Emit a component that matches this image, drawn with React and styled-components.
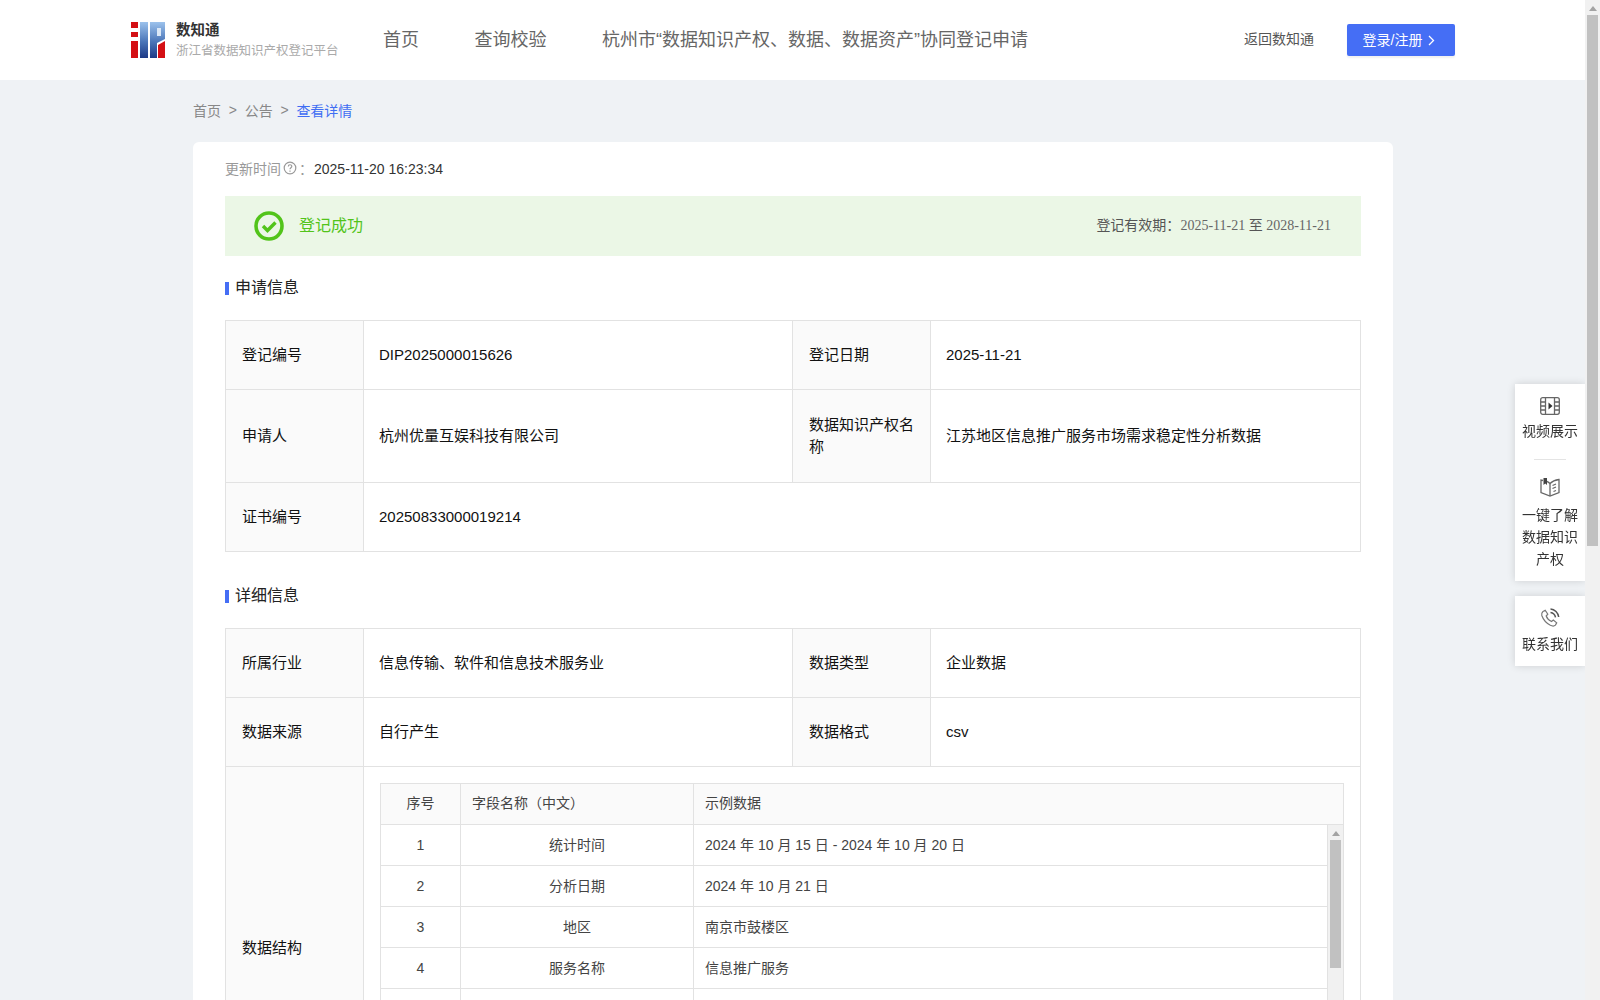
import React from 'react';
import styled, { createGlobalStyle } from 'styled-components';

const GlobalStyle = createGlobalStyle`
html, body {
    margin: 0;
    padding: 0;
}
body {
    background: #eff2f5;
    color: #222;
    font-family: "Liberation Sans", "Noto Sans CJK SC", sans-serif;
    font-size: 14px;
}
* {
    box-sizing: border-box;
}
`;

const Page = styled.div`
    width: 1585px;
    min-height: 1830px;
`;

const Header = styled.header`
    height: 80px;
    background: #fff;
    display: flex;
    align-items: center;
    padding: 0 130px 0 131px;
`;

const Brand = styled.div`
    display: flex;
    align-items: center;
    gap: 11px;
    width: 252px;
`;

const BrandText = styled.div`
    display: flex;
    flex-direction: column;
    gap: 4px;
    padding-top: 1px;
`;

const BrandName = styled.div`
    font-size: 14.5px;
    line-height: 18px;
    font-weight: 700;
    color: #333;
`;

const BrandSub = styled.div`
    font-size: 12.5px;
    line-height: 17px;
    color: #aaa;
    white-space: nowrap;
`;

const Nav = styled.nav`
    display: flex;
    align-items: center;
    gap: 55.5px;
    flex: 1;
    padding-bottom: 4px;
`;

const NavLink = styled.a`
    font-size: 18px;
    color: #666;
    white-space: nowrap;
`;

const BackLink = styled.a`
    font-size: 14px;
    color: #555;
    margin-right: 33px;
    padding-bottom: 4px;
`;

const LoginButton = styled.button`
    width: 108px;
    height: 32px;
    border: 0;
    border-radius: 2px;
    padding: 0 4px 3px 0;
    background: #456ef5;
    color: #fff;
    font: inherit;
    font-size: 14px;
    box-shadow: 0 2px 2px rgba(0, 0, 0, 0.06);
    display: flex;
    align-items: center;
    justify-content: center;
    gap: 6px;
    svg {
        margin-top: 3px;
    }
`;

const Main = styled.main`
    width: 1200px;
    margin-left: 193px;
`;

const Crumbs = styled.div`
    height: 62px;
    display: flex;
    align-items: center;
    gap: 7.75px;
    padding-bottom: 3px;
    color: #888;
`;

const Crumb = styled.span`
    color: ${(p) => (p.$active ? '#3f6ef3' : '#888')};
`;

const Card = styled.section`
    background: #fff;
    border-radius: 6px;
    padding: 17px 32px 40px;
`;

const UpdateRow = styled.div`
    height: 20px;
    display: flex;
    align-items: center;
    margin-bottom: 17px;
    color: #333;
`;

const UpdateLabel = styled.span`
    color: #999;
    display: flex;
    align-items: center;
    gap: 2px;
    padding-bottom: 3px;
    margin-right: 1px;
`;

const Banner = styled.div`
    height: 60px;
    background: #ebf7e6;
    display: flex;
    align-items: center;
    padding: 0 30px 0 29px;
`;

const BannerTitle = styled.span`
    font-size: 16px;
    color: #52c41a;
    margin-left: 15px;
    padding-bottom: 4px;
    flex: 1;
`;

const Validity = styled.span`
    color: #555;
    padding-bottom: 4px;
`;

const Dates = styled.span`
    font-family: "Liberation Serif", "Noto Sans CJK SC", serif;
    color: #666;
`;

const SectionTitle = styled.h3`
    margin: 0;
    height: 64px;
    padding-top: 22px;
    font-size: 16px;
    font-weight: 400;
    line-height: 20px;
    color: #222;
    display: flex;
    gap: 6px;
`;

const TitleMark = styled.i`
    width: 4px;
    height: 13px;
    margin-top: 4px;
    background: #456ef5;
`;

const InfoTable = styled.table`
    width: 100%;
    border-collapse: collapse;
    table-layout: fixed;
    margin-bottom: 12px;
    line-height: 22px;
    font-size: 15px;
`;

const LabelCell = styled.td`
    padding: 11px 16px;
    border: 1px solid #e2e2e2;
    background: #fafafa;
    color: #111;
`;

const ValueCell = styled.td`
    padding: 11px 16px 11px 15px;
    border: 1px solid #e2e2e2;
    color: #111;
`;

const FieldCellWrap = styled(ValueCell)`
    padding: 16px;
    font-size: 14px;
`;

const Row = styled.tr`
    height: ${(p) => p.$height}px;
`;

const FieldHead = styled.div`
    display: grid;
    grid-template-columns: 79px 233px 1fr;
    background: #fafafa;
    border: 1px solid #e2e2e2;
    height: 42px;
    color: #444;
    line-height: 38px;
`;

const HeadCell = styled.div`
    padding-left: ${(p) => (p.$center ? 0 : 11)}px;
    text-align: ${(p) => (p.$center ? 'center' : 'left')};
    border-left: ${(p) => (p.$first ? 0 : 1)}px solid #e2e2e2;
`;

const FieldBody = styled.div`
    height: 287px;
    display: flex;
    overflow: hidden;
    border: 1px solid #e2e2e2;
    border-top: 0;
    border-bottom: 0;
`;

const FieldList = styled.div`
    flex: 1;
    min-width: 0;
    border-right: 1px solid #e2e2e2;
`;

const FieldRow = styled.div`
    display: grid;
    grid-template-columns: 79px 233px 1fr;
    height: 41px;
    border-bottom: 1px solid #e2e2e2;
    line-height: 40px;
    color: #444;
`;

const FieldCell = styled.div`
    text-align: ${(p) => (p.$center ? 'center' : 'left')};
    padding-left: ${(p) => (p.$center ? 0 : 11)}px;
    border-left: ${(p) => (p.$first ? 0 : 1)}px solid #e2e2e2;
`;

const Rail = styled.div`
    width: 15px;
    flex: none;
    background: #f1f1f1;
    display: flex;
    flex-direction: column;
    align-items: center;
`;

const PageRail = styled(Rail)`
    position: fixed;
    top: 0;
    right: 0;
    height: 100vh;
`;

const RailArrow = styled.div`
    flex: none;
    width: 0;
    height: 0;
    margin: 6px 0 4px;
    border-left: 4px solid transparent;
    border-right: 4px solid transparent;
    border-bottom: 5px solid #a3a3a3;
`;

const RailThumb = styled.div`
    flex: none;
    width: 11px;
    height: ${(p) => p.$height}px;
    background: #c1c1c1;
`;

const SideStack = styled.aside`
    position: fixed;
    top: 384px;
    right: 15px;
    width: 70px;
    display: flex;
    flex-direction: column;
    gap: 15px;
`;

const SidePanel = styled.div`
    background: #fff;
    box-shadow: 0 0 8px rgba(0, 0, 0, 0.14);
    padding: ${(p) => p.$top}px 0 11px;
    display: flex;
    flex-direction: column;
    align-items: center;
`;

const SideItem = styled.div`
    display: flex;
    flex-direction: column;
    align-items: center;
    text-align: center;
    line-height: 22px;
    color: #333;
    gap: ${(p) => p.$gap}px;
`;

const SideRule = styled.div`
    width: 32px;
    height: 1px;
    background: #e4e4e4;
    margin: 17px 0 17px;
`;

const fields = [
    ['统计时间', '2024 年 10 月 15 日 - 2024 年 10 月 20 日'],
    ['分析日期', '2024 年 10 月 21 日'],
    ['地区', '南京市鼓楼区'],
    ['服务名称', '信息推广服务'],
];

const Logo = () => (
    <svg width="34" height="36" viewBox="0 0 34 36">
        <defs>
            <linearGradient id="logoBlue" x1="0" y1="0" x2="0" y2="1">
                <stop offset="0" stopColor="#9cc2ec" />
                <stop offset="0.55" stopColor="#4a75b8" />
                <stop offset="1" stopColor="#1d3a86" />
            </linearGradient>
        </defs>
        <path fill="#d40f14" d="M0 0h7v6H0zM0 10h7v5H0zM0 19h7v17H0z" />
        <path fill="url(#logoBlue)" d="M9 0h8v36H9zM19 0h15v17l-8 4v15h-7z" />
        <path fill="#dbe8f7" d="M26 6h4v8h-4z" />
        <path fill="#d40f14" d="M27 23l7-4v17h-7z" />
    </svg>
);

const FilmIcon = () => (
    <svg width="20" height="18" viewBox="0 0 20 18" fill="none" stroke="#666" strokeWidth="1.3">
        <rect x="0.7" y="0.7" width="18.6" height="16.6" rx="2" />
        <path d="M5.5 1v16M14.5 1v16M1 5h4.5M1 9h4.5M1 13h4.5M14.5 5H19M14.5 9H19M14.5 13H19" />
        <path d="M8.5 5.5l4 3.5-4 3.500z" fill="#333" stroke="none" />
    </svg>
);

const BookIcon = () => (
    <svg width="20" height="20" viewBox="0 0 20 20" fill="none" stroke="#666" strokeWidth="1.3">
        <path d="M3 3.500 1 3v12.500l9 3.500 9-3.500V2.500c-3.500.5-7 2-9 4-1-1-2-1.700-3-2.200" />
        <path d="M10 6.500V19M12.500 8.500l3.500-1.500M12.500 11.500l3.500-1.500M13.500 14.500l2.500-1" />
        <path d="M3.500 1h3.500v7L5.200 6.500 3.500 8z" fill="#444" stroke="none" />
    </svg>
);

const PhoneIcon = () => (
    <svg width="20" height="20" viewBox="0 0 20 20" fill="none" stroke="#777" strokeWidth="1.2">
        <path d="M3 3.500l2.200-1.300 2.600 4L6.200 8c.8 2.200 3 4.500 5.300 5.500l1.800-1.500 3.400 2.800-1.300 2.300c-1 1-3 1.200-5 .2C7 15.500 3.200 11.500 1.800 7.500c-.5-1.700.1-3 1.200-4z" />
        <path d="M10.500 1c4.200.3 7.700 3.700 8.200 8M10.500 4.500c2.500.3 4.500 2.300 5 4.800" stroke="#555" strokeWidth="1.500" />
    </svg>
);

const App = () => (
    <Page>
        <GlobalStyle />
        <Header>
            <Brand>
                <Logo />
                <BrandText>
                    <BrandName>数知通</BrandName>
                    <BrandSub>浙江省数据知识产权登记平台</BrandSub>
                </BrandText>
            </Brand>
            <Nav>
                <NavLink>首页</NavLink>
                <NavLink>查询校验</NavLink>
                <NavLink>杭州市“数据知识产权、数据、数据资产”协同登记申请</NavLink>
            </Nav>
            <BackLink>返回数知通</BackLink>
            <LoginButton>
                登录/注册
                <svg width="7" height="11" viewBox="0 0 7 11" fill="none" stroke="#fff" strokeWidth="1.3">
                    <path d="M1 1l4.500 4.500L1 10" />
                </svg>
            </LoginButton>
        </Header>
        <Main>
            <Crumbs>
                <Crumb>首页</Crumb>
                <span>&gt;</span>
                <Crumb>公告</Crumb>
                <span>&gt;</span>
                <Crumb $active>查看详情</Crumb>
            </Crumbs>
            <Card>
                <UpdateRow>
                    <UpdateLabel>
                        更新时间
                        <svg width="14" height="14" viewBox="0 0 14 14" fill="none" stroke="#999" strokeWidth="1.2">
                            <circle cx="7" cy="7" r="5.8" />
                            <path d="M5.300 5.500c0-2.300 3.500-2.300 3.500-.2 0 1.400-1.800 1.400-1.800 3" />
                            <path d="M7 9.500v1.200" />
                        </svg>
                        ：
                    </UpdateLabel>
                    2025-11-20 16:23:34
                </UpdateRow>
                <Banner>
                    <svg width="30" height="30" viewBox="0 0 30 30" fill="none" stroke="#52c41a">
                        <circle cx="15" cy="15" r="13" strokeWidth="3.6" />
                        <path d="M9 15l4.500 4.500L21.500 11.500" strokeWidth="3.4" />
                    </svg>
                    <BannerTitle>登记成功</BannerTitle>
                    <Validity>
                        登记有效期：<Dates>2025-11-21 </Dates>至<Dates> 2028-11-21</Dates>
                    </Validity>
                </Banner>
                <SectionTitle>
                    <TitleMark />
                    申请信息
                </SectionTitle>
                <InfoTable>
                    <colgroup>
                        <col width="138" />
                        <col width="429" />
                        <col width="138" />
                        <col />
                    </colgroup>
                    <tbody>
                        <Row $height={69}>
                            <LabelCell>登记编号</LabelCell>
                            <ValueCell>DIP2025000015626</ValueCell>
                            <LabelCell>登记日期</LabelCell>
                            <ValueCell>2025-11-21</ValueCell>
                        </Row>
                        <Row $height={93}>
                            <LabelCell>申请人</LabelCell>
                            <ValueCell>杭州优量互娱科技有限公司</ValueCell>
                            <LabelCell>数据知识产权名称</LabelCell>
                            <ValueCell>江苏地区信息推广服务市场需求稳定性分析数据</ValueCell>
                        </Row>
                        <Row $height={69}>
                            <LabelCell>证书编号</LabelCell>
                            <ValueCell colSpan={3}>20250833000019214</ValueCell>
                        </Row>
                    </tbody>
                </InfoTable>
                <SectionTitle>
                    <TitleMark />
                    详细信息
                </SectionTitle>
                <InfoTable>
                    <colgroup>
                        <col width="138" />
                        <col width="429" />
                        <col width="138" />
                        <col />
                    </colgroup>
                    <tbody>
                        <Row $height={69}>
                            <LabelCell>所属行业</LabelCell>
                            <ValueCell>信息传输、软件和信息技术服务业</ValueCell>
                            <LabelCell>数据类型</LabelCell>
                            <ValueCell>企业数据</ValueCell>
                        </Row>
                        <Row $height={69}>
                            <LabelCell>数据来源</LabelCell>
                            <ValueCell>自行产生</ValueCell>
                            <LabelCell>数据格式</LabelCell>
                            <ValueCell>csv</ValueCell>
                        </Row>
                        <tr>
                            <LabelCell>数据结构</LabelCell>
                            <FieldCellWrap colSpan={3}>
                                <FieldHead>
                                    <HeadCell $first $center>序号</HeadCell>
                                    <HeadCell>字段名称（中文）</HeadCell>
                                    <HeadCell>示例数据</HeadCell>
                                </FieldHead>
                                <FieldBody>
                                    <FieldList>
                                        {Array.from({ length: 7 }, (_, i) => (
                                            <FieldRow key={i}>
                                                <FieldCell $first $center>{i < fields.length ? i + 1 : ''}</FieldCell>
                                                <FieldCell $center>{fields[i] ? fields[i][0] : ''}</FieldCell>
                                                <FieldCell>{fields[i] ? fields[i][1] : ''}</FieldCell>
                                            </FieldRow>
                                        ))}
                                    </FieldList>
                                    <Rail>
                                        <RailArrow />
                                        <RailThumb $height={128} />
                                    </Rail>
                                </FieldBody>
                            </FieldCellWrap>
                        </tr>
                    </tbody>
                </InfoTable>
            </Card>
        </Main>
        <SideStack>
            <SidePanel $top={13}>
                <SideItem $gap={5}>
                    <FilmIcon />
                    视频展示
                </SideItem>
                <SideRule />
                <SideItem $gap={7}>
                    <BookIcon />
                    <span>一键了解<br />数据知识<br />产权</span>
                </SideItem>
            </SidePanel>
            <SidePanel $top={12}>
                <SideItem $gap={5}>
                    <PhoneIcon />
                    联系我们
                </SideItem>
            </SidePanel>
        </SideStack>
        <PageRail>
            <RailArrow />
            <RailThumb $height={531} />
        </PageRail>
    </Page>
);

export default App;
